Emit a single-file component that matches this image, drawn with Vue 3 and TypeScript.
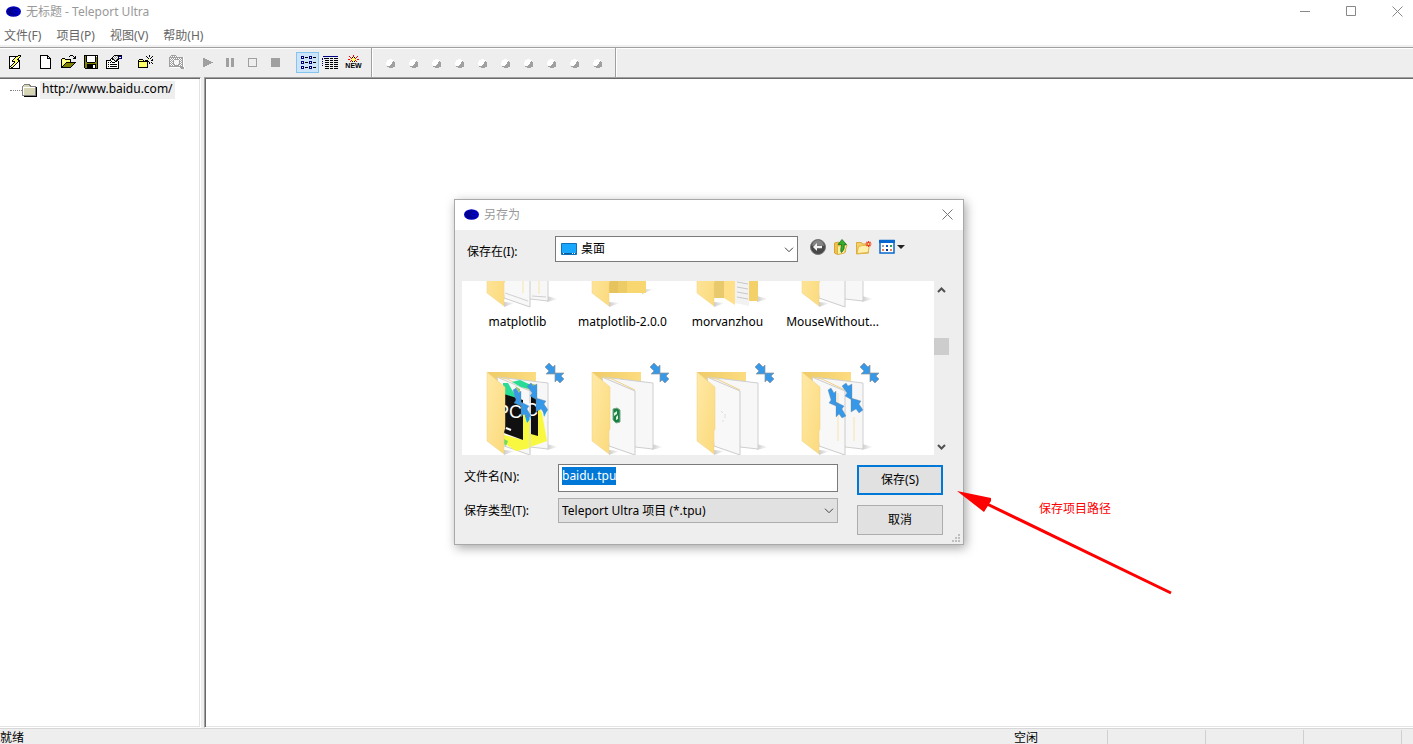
<script setup lang="ts">
import { onMounted, ref } from 'vue'

type Run = { x: number; y: number; w: number; fill: string }

const palette: Record<string, string> = {
  k: '#000000',
  w: '#ffffff',
  y: '#ffff66',
  o: '#808000',
  g: '#a0a0a0',
  b: '#000080',
  r: '#ff0000',
}

/* Turns rows of palette letters into horizontal runs of pixels. */
function pixels(rows: string[]): Run[] {
  const runs: Run[] = []
  rows.forEach((row, y) => {
    let x = 0
    while (x < row.length) {
      const c = row[x]
      let end = x + 1
      while (end < row.length && row[end] === c) end++
      if (palette[c]) runs.push({ x, y, w: end - x, fill: palette[c] })
      x = end
    }
  })
  return runs
}

const wizard = [
  '',
  '............kkk..',
  '...kkkkkkkkkyyk..',
  '...kwwwwwkyyyk...',
  '...kwwwwkyyyk....',
  '...kwwwkyyykk....',
  '...kwwkyyyyykk...',
  '...kwwkkkyyykk...',
  '...kwwwwkyykwk...',
  '...kwwwkyykwwk...',
  '...kwwkyykwwwk...',
  '...kwkyykwwwwk...',
  '...kkyykwwwwwk...',
  '...kykkwwwwwwk...',
  '...kkkkkkkkkkk...',
]
const newFile = [
  '',
  '...kkkkkkkk......',
  '...kwwwwwwkk.....',
  '...kwwwwwwkwk....',
  '...kwwwwwwkkkk...',
  ...Array<string>(9).fill('...kwwwwwwwwwk...'),
  '...kkkkkkkkkkk...',
]
const open = [
  '',
  '..........kkk....',
  '.........k...k.k.',
  '..............kk.',
  '..kkk........kkk.',
  '.kyyykkkkkk......',
  '.kywyyywyyk......',
  '.kyyywyyyyk......',
  '.kywyykkkkkkkkkk.',
  '.kyyykooooooook..',
  '.kyykooooooook...',
  '.kykooooooook....',
  '.kkooooooook.....',
  '.kkkkkkkkkk......',
]
const save = [
  '',
  '.kkkkkkkkkkkkkk..',
  '.kokwwwwwwwwkwk..',
  ...Array<string>(5).fill('.kokwwwwwwwwkok..'),
  '.kookkkkkkkkook..',
  '.kooooooooooook..',
  '.kookkkkkkkkkok..',
  '.kookkkkkkwwkok..',
  '.kookkkkkkwwkok..',
  '.kookkkkkkwwkok..',
  '..kkkkkkkkkkkkk..',
]
const properties = [
  '',
  '........kkkkkkkk.',
  '.......kwgwgkbbb.',
  '......kwgwgwkwwb.',
  '.....kkgwgwgkbbb.',
  '....kwkkgwgkk....',
  'kkkkkwwwkgkk.....',
  'kwwwwkwwwkkwk....',
  'kwkwkwkkkwwwk....',
  'kwwwwwwwwwwwk....',
  'kwkwkkkkkkkwk....',
  'kwwwwwwwwwwwk....',
  'kwkwkkkkkkkwk....',
  'kwwwwwwwwwwwk....',
  'kkkkkkkkkkkkk....',
]
const newFolder = [
  '',
  '............k....',
  '.........k..k..k.',
  '..........k...k..',
  '...........k.k...',
  '..kkkk......y..k.',
  '.kyyyyk.kkk...kk.',
  '.kkkkkkkkkkk.....',
  '.kyyyyyyyyk.k.k..',
  '.kyyyyyyyyk.k..k.',
  '.kyyyyyyyyk......',
  '.kyyyyyyyyk......',
  '.kyyyyyyyyk......',
  '.kkkkkkkkkk......',
]
const find = [
  '',
  '...ggggg.........',
  '..gwgwgwgw.......',
  '.ggggggggggggggw.',
  '.gwgwgwgwgwgwggw.',
  '.ggwgwgggggwgwgw.',
  '.gwgwgw.w.wgwggw.',
  '.ggwgg.w.w.ggwgw.',
  '.gwgwgw.w.wgwggw.',
  '.ggwgg.w.w.ggwgw.',
  '.gwgwggw.wggwggw.',
  '.ggwgwgggggwgwgw.',
  '.ggggggggggggggw.',
  '..wwwwwwwwwwggggw',
  '.............gggw',
]
const listView = [
  '',
  '',
  ...['', '', ''].flatMap(() => [
    '..bbb.....bbb....',
    '..bwb.kkk.bwb.kkk',
    '..bbb.....bbb....',
    '',
    '',
  ]),
]
const detailView = [
  '',
  '',
  '.bbbbbbbbbbbbbbb.',
  '',
  'b.kkkkk.kkk.kkkk.',
  'b................',
  '...kkkk.kkk.kkkk.',
  'b................',
  '...kkkk.kkk.kkkk.',
  'b................',
  '...kkkk.kkk.kkkk.',
  'b................',
  '...kkkk.kkk.kkkk.',
  '',
  '...kkkk.kkk.kkkk.',
]
const play = ['', '', '', '', '....gg', '....gggg', '....gggggg', '....gggggggg', '....gggggggggg', '....gggggggg', '....gggggg', '....gggg', '....gg']
const pause = ['', '', '', '', ...Array<string>(9).fill('....ggg..ggg')]
const hollow = ['', '', '', '', '...ggggggggg', ...Array<string>(7).fill('...g.......g'), '...ggggggggg']
const square = ['', '', '', '', ...Array<string>(9).fill('...ggggggggg')]
const burst = [
  '',
  '........r........',
  '....r...r...r....',
  '.....r.kyk.r.....',
  '......ryyyr......',
  '...rr.yyyyy.rr...',
  '......ryyyr......',
  '.....r.kyk.r.....',
]
const lamp = [
  '...www...',
  '.wwwwwww.',
  '.wwwwwwg.',
  'wwwwwwggg',
  'wwwwwwggg',
  'wwwwwgggg',
  '.wwwggggg',
  '.gggggggg',
  '...gggg..',
]
const lampRuns = pixels(lamp)

const toolGroups = [
  [{ name: '向导', art: wizard }],
  [
    { name: '新建', art: newFile },
    { name: '打开', art: open },
    { name: '保存', art: save },
    { name: '属性', art: properties },
  ],
  [{ name: '新建文件夹', art: newFolder }],
  [{ name: '查找', art: find }],
  [
    { name: '开始', art: play },
    { name: '暂停', art: pause },
    { name: '停止', art: hollow },
    { name: '中止', art: square },
  ],
  [
    { name: '列表', art: listView, on: true },
    { name: '详细', art: detailView },
    { name: '最新', art: burst, caption: 'NEW' },
  ],
].map((group) => group.map((t) => ({ on: false, caption: '', ...t, runs: pixels(t.art) })))

const menus = ['文件(F)', '项目(P)', '视图(V)', '帮助(H)']

const folders = [
  { id: 1, label: 'matplotlib', kind: 'docs' },
  { id: 2, label: 'matplotlib-2.0.0', kind: 'nested' },
  { id: 3, label: 'morvanzhou', kind: 'mixed' },
  { id: 4, label: 'MouseWithout...', kind: 'plain' },
  { id: 5, label: '', kind: 'pycharm' },
  { id: 6, label: '', kind: 'app' },
  { id: 7, label: '', kind: 'empty' },
  { id: 8, label: '', kind: 'links' },
]

const fileName = ref('baidu.tpu')
const nameBox = ref<HTMLInputElement | null>(null)

onMounted(() => {
  nameBox.value?.focus()
  nameBox.value?.select()
})
</script>

<template>
  <div class="window">
    <header class="titlebar">
      <svg class="logo" width="15" height="11" viewBox="0 0 15 11">
        <ellipse cx="7.5" cy="5.5" rx="7.5" ry="5.3" fill="#0000c0" />
        <ellipse cx="7" cy="5.5" rx="6" ry="4" fill="#000090" />
        <ellipse cx="10" cy="5.5" rx="2.5" ry="1.7" fill="none" stroke="#0000e8" />
      </svg>
      <span class="caption">无标题 - Teleport Ultra</span>
      <div class="controls">
        <button type="button" aria-label="最小化">
          <svg width="11" height="11"><path d="M0 5.5h10" stroke="#888" /></svg>
        </button>
        <button type="button" aria-label="最大化">
          <svg width="11" height="11"><path d="M.5 .5h9v9h-9z" fill="none" stroke="#888" /></svg>
        </button>
        <button type="button" aria-label="关闭">
          <svg width="11" height="11"><path d="M.5 .5l10 10M10.5 .5l-10 10" stroke="#888" /></svg>
        </button>
      </div>
    </header>

    <nav class="menubar">
      <button v-for="m in menus" :key="m" type="button">{{ m }}</button>
    </nav>

    <div class="toolbar">
      <div class="tools">
        <div v-for="(group, i) in toolGroups" :key="i" class="group">
          <button v-for="t in group" :key="t.name" type="button" :class="{ on: t.on }" :aria-label="t.name">
            <svg width="17" height="17" viewBox="0 0 17 17">
              <g shape-rendering="crispEdges">
                <rect v-for="(p, n) in t.runs" :key="n" :x="p.x" :y="p.y" :width="p.w" height="1" :fill="p.fill" />
              </g>
              <text v-if="t.caption" x="8.5" y="14" text-anchor="middle" class="tag">{{ t.caption }}</text>
            </svg>
          </button>
        </div>
      </div>
      <div class="lamps">
        <i v-for="n in 10" :key="n">
          <svg width="9" height="9" shape-rendering="crispEdges">
            <rect v-for="(p, k) in lampRuns" :key="k" :x="p.x" :y="p.y" :width="p.w" height="1" :fill="p.fill" />
          </svg>
        </i>
      </div>
    </div>

    <main class="panes">
      <aside class="tree">
        <a class="node" href="#">
          <i class="dots"></i>
          <svg width="16" height="13" viewBox="0 0 16 13" shape-rendering="crispEdges">
            <path d="M3 1h5l1 2h6v10H2V2z" fill="#000" />
            <path d="M2 0h5l2 2h5v10H0V2z" fill="#808080" />
            <path d="M2 1h5l1 2H1zM1 3h12v8H1z" fill="#d6d6b4" />
            <path d="M1 3h12M1.500 3v8" stroke="#fff" fill="none" />
          </svg>
          <span>http://www.baidu.com/</span>
        </a>
      </aside>
      <section class="view"></section>
    </main>

    <footer class="status">
      <span class="ready">就绪</span>
      <span class="idle">空闲</span>
      <i></i><i></i><i></i><i class="tail"></i>
    </footer>

    <form class="dialog" role="dialog" aria-label="另存为" @submit.prevent>
      <header class="dialog-title">
        <svg class="logo" width="15" height="11" viewBox="0 0 15 11">
          <ellipse cx="7.5" cy="5.500" rx="7.5" ry="5.3" fill="#0000c0" />
          <ellipse cx="7" cy="5.5" rx="6" ry="4" fill="#000090" />
          <ellipse cx="10" cy="5.5" rx="2.5" ry="1.7" fill="none" stroke="#0000e8" />
        </svg>
        <span class="caption">另存为</span>
        <button type="button" aria-label="关闭">
          <svg width="11" height="11"><path d="M.5 .5l10 10M10.5 .5l-10 10" stroke="#777" /></svg>
        </button>
      </header>

      <div class="place">
        <label for="folder">保存在(I):</label>
        <div class="drop">
          <svg class="desk" width="16" height="12" viewBox="0 0 16 12">
            <path d="M.5 .5h15v11H.5z" fill="#18a8ff" stroke="#1070b8" />
            <path d="M1 10.500h14" stroke="#0c5c98" />
            <path d="M2 10.500h1M11 10.500h1M13 10.500h1" stroke="#fff" />
          </svg>
          <select id="folder"><option>桌面</option></select>
          <svg class="chevron" width="10" height="6"><path d="M1 .7l4 4 4-4" /></svg>
        </div>
        <div class="place-tools">
          <button type="button" aria-label="后退">
            <svg width="16" height="16" viewBox="0 0 16 16">
              <circle cx="8" cy="8" r="7.500" fill="#484848" stroke="#777" />
              <path d="M2 7a6 6 0 0 1 12 0q-6-2-12 0z" fill="#858585" />
              <path d="M3 8l4-4v2.700h5v2.600H7V12z" fill="#f4f4f4" />
            </svg>
          </button>
          <button type="button" aria-label="向上一级">
            <svg width="16" height="16" viewBox="0 0 16 16">
              <path d="M1.500 4l4-1 1 1.500h6V13l-8 2.500-3-1.500z" fill="#eec34c" stroke="#d5a336" />
              <path d="M4.500 7l9.500-1-2.500 8-7 1.500z" fill="#ffeda0" stroke="#dcb34a" />
              <path d="M9 .5l4.500 5h-2.300q1 5-2.700 8-1.500-1 .2-8H5z" fill="#35ad2e" stroke="#16751b" stroke-width=".8" />
            </svg>
          </button>
          <button type="button" aria-label="新建文件夹">
            <svg width="16" height="16" viewBox="0 0 16 16">
              <path d="M.5 3.500h5l1 1.500h6v9l-12 1z" fill="#f4cf67" stroke="#dcaa3e" />
              <path d="M2.500 7.500l4-1 7-.5-1.500 7.500-11 1z" fill="#fff0ab" stroke="#e3b851" />
              <path d="M12.500 2v6M9.500 5h6M10.400 2.900l4.200 4.200M14.600 2.900l-4.200 4.200" stroke="#e83c20" stroke-width="1.200" />
              <circle cx="12.500" cy="5" r="1" fill="#ffdf72" />
            </svg>
          </button>
          <button type="button" class="wide" aria-label="查看">
            <svg width="26" height="16" viewBox="0 0 26 16">
              <path d="M1 1.500h14V14H1z" fill="#fff" stroke="#0868d0" stroke-width="1.500" />
              <path d="M0 1h16v3H0z" fill="#0868d0" />
              <path d="M3 6h2v2H3z" fill="#a0a0a0" /><path d="M7 6h2v2H7z" fill="#1858b8" />
              <path d="M11 6h2v2h-2z" fill="#30a050" /><path d="M3 10h2v2H3z" fill="#f08050" />
              <path d="M7 10h2v2H7z" fill="#102f88" /><path d="M11 10h2v2h-2z" fill="#f08050" />
              <path d="M18 6h8l-4 4z" fill="#222" />
            </svg>
          </button>
        </div>
      </div>

      <div class="browser">
        <div class="files">
          <ul>
            <li v-for="f in folders" :key="f.id">
              <svg width="105" height="96" viewBox="0 0 105 96">
                <defs>
                  <linearGradient :id="'flap' + f.id" x2="1" y2="1">
                    <stop offset="0" stop-color="#ffe9a6" /><stop offset="1" stop-color="#fbda7c" />
                  </linearGradient>
                  <linearGradient :id="'back' + f.id" x2="1">
                    <stop offset="0" stop-color="#efcb66" /><stop offset="1" stop-color="#fbdc80" />
                  </linearGradient>
                  <linearGradient :id="'shade' + f.id" x2="1">
                    <stop offset="0" stop-color="#ccc" /><stop offset="1" stop-color="#fff" />
                  </linearGradient>
                </defs>
                <path d="M39 89l11 1-11 4z" :fill="`url(#shade${f.id})`" />
                <path v-if="f.kind === 'nested'" d="M72 76l12 0-12 5z" :fill="`url(#shade${f.id})`" />
                <path v-else d="M82 83l11 3-11 3z" :fill="`url(#shade${f.id})`" />
                <path d="M22 11h49v12H30z" :fill="`url(#back${f.id})`" />

                <template v-if="f.kind === 'nested'">
                  <path d="M39 20h37v60H39z" fill="#f8d670" />
                  <path d="M39 20h9v60h-9z" fill="#e6c35c" /><path d="M48 20h9v60h-9z" fill="#edcc66" />
                </template>
                <template v-else-if="f.kind === 'mixed'">
                  <path d="M38 20h12v65H38z" fill="#e8c96c" />
                  <path d="M74 20h9v68h-9z" fill="#f4d168" />
                  <path d="M60 22l14 4v67l-14-3z" fill="#f2f2f2" />
                  <path d="M62 69l11 2M62 74l11 2M62 79l11 2M62 84l11 2" stroke="#c8c8c8" />
                  <path d="M49 20l11 6v66l-11-7z" fill="#ffdf88" />
                </template>
                <template v-else>
                  <path d="M33 16l50 6v66l-18-2z" fill="#f7f7f7" stroke="#cfcfcf" />
                  <path d="M32 16l33 14v64l-26-9z" fill="#f8f8f8" stroke="#cccccc" />
                  <path d="M32 16l10 2 23 11" fill="none" stroke="#f0d287" />
                </template>

                <g v-if="f.kind === 'docs'">
                  <path d="M58 20v60M74 25v56" stroke="#f7e4aa" />
                  <path d="M40 80l23 8M67 83l14 1" stroke="#d0d0d0" />
                </g>
                <g v-else-if="f.kind === 'pycharm'">
                  <path d="M39 74l19 5V50l7 8v29l-14 3-12-8zM65 72l7 2V44l5 8 5 28-17 6z" fill="#f8f840" />
                  <path d="M38 22l5 0 7 12v3l-12-3zM47 21l8-2 11 5-2 4-8-2z" fill="#28dc96" />
                  <path d="M60 55l6-3v5l-4 5zM77 45l5 5-3 6z" fill="#18a8f8" />
                  <path d="M65 24v70" stroke="#ddd" />
                  <path d="M39 33l19 6v40l-19-7zM66 34l7 5v36l-7-2z" fill="#101010" />
                  <text x="32" y="57" class="pc">PC</text>
                  <text x="60" y="55" class="pc">C</text>
                  <path d="M41 67l5 2" fill="none" stroke="#fff" stroke-width="2" />
                  <path d="M39 78l4 2-2 5-2-2z" fill="#70dc60" />
                  <path d="M50 25l5 3v5zM65 22l6 2-2 4z" fill="#9bc660" />
                </g>
                <g v-else-if="f.kind === 'app'">
                  <path d="M43 48l4-1 3 2v12l-4 1-3-3z" fill="#188040" stroke="#78a888" />
                  <path d="M44 52l3-2v3l-3 2zM46 56l2-2v4l-2 1z" fill="#d8f4dc" />
                </g>
                <path v-else-if="f.kind === 'empty'" d="M46 50l2 2M47 60h2M50 53v4" stroke="#ddd" />
                <path v-else-if="f.kind === 'links'" d="M58 32v48M74 56v24" stroke="#f9e3aa" />

                <g v-if="f.kind === 'pycharm' || f.kind === 'links'" fill="#3898e8" stroke="#70828f" stroke-width=".3">
                  <path d="M48 29l3-2 3 5 2-2v15l-7-3 2-3zM56 41l8 4-2 3 4 7-4 2-3-4-3 3z" />
                  <path d="M62 25l4-3 2 3 4-2v16l-7-4 2-3zM71 37l10 3-2 3 4 6-4 3-3-4-5 3z" />
                </g>

                <path d="M22 11l18 15v42l-1 2v23L22 80z" :fill="`url(#flap${f.id})`" stroke="#f0d080" stroke-width=".5" />
                <path d="M80 6l4-4 4 4 2-2v9h-9l3-3zM90 12h9l-3 3 3 3-4 4-3-3-2 2z" fill="#3898e8" stroke="#8c9298" stroke-width=".7" />
              </svg>
              <span v-if="f.label">{{ f.label }}</span>
            </li>
          </ul>
        </div>
        <div class="scroll">
          <svg width="9" height="6"><path d="M1 5l3.500-3.500L8 5" /></svg>
          <b></b>
          <svg width="9" height="6"><path d="M1 1l3.500 3.500L8 1" /></svg>
        </div>
      </div>

      <div class="fields">
        <div class="inputs">
          <label for="filename">文件名(N):</label>
          <input id="filename" ref="nameBox" v-model="fileName" type="text" spellcheck="false" autocomplete="off" />
          <label for="filetype">保存类型(T):</label>
          <div class="drop type">
            <select id="filetype"><option>Teleport Ultra 项目 (*.tpu)</option></select>
            <svg class="chevron" width="10" height="6"><path d="M1 .7l4 4 4-4" /></svg>
          </div>
        </div>
        <div class="actions">
          <button type="submit" class="primary">保存(S)</button>
          <button type="button">取消</button>
        </div>
      </div>
      <svg class="grip" width="8" height="8" shape-rendering="crispEdges">
        <path d="M6 0h2v2H6zM3 3h2v2H3zM6 3h2v2H6zM0 6h2v2H0zM3 6h2v2H3zM6 6h2v2H6z" fill="#bfbfbf" />
      </svg>
    </form>

    <div class="note">
      <svg width="216" height="104" viewBox="0 0 216 104">
        <path d="M0 0l34 7v3l-2 3-5 8z" fill="#f00" />
        <path d="M28 12l186 90" stroke="#f00" stroke-width="3" />
      </svg>
      <span>保存项目路径</span>
    </div>
  </div>
</template>

<style>
html,
body {
  overflow: hidden;
}
</style>

<style scoped>
.window {
  position: relative;
  display: flex;
  flex-direction: column;
  height: 100vh;
  overflow: hidden;
  background: #fff;
  color: #000;
  font: 12px/16px "Noto Sans", "Noto Sans CJK SC", sans-serif;
}
* {
  box-sizing: border-box;
}
button,
input,
select {
  margin: 0;
  padding: 0;
  border: 0;
  border-radius: 0;
  background: none;
  color: inherit;
  font: inherit;
}
svg {
  display: block;
  flex: none;
}
.titlebar {
  display: flex;
  align-items: center;
  height: 23px;
  padding-left: 6px;
  color: #999;
}
.caption {
  margin-left: 5px;
}
.controls {
  display: flex;
  gap: 15px;
  margin-left: auto;
}
.controls button {
  display: flex;
  align-items: center;
  justify-content: center;
  width: 31px;
  height: 22px;
}
.menubar {
  display: flex;
  gap: 15px;
  height: 24px;
  padding-left: 4px;
  border-bottom: 2px solid #f0f0f0;
  color: #666;
}
.menubar button {
  padding-top: 4px;
}
.toolbar {
  display: flex;
  height: 30px;
  border-top: 1px solid #a0a0a0;
  background: #eee;
  box-shadow: inset 0 1px #fff;
}
.tools,
.lamps {
  display: flex;
  align-items: center;
  border-right: 1px solid #a0a0a0;
  box-shadow: 1px 0 #fff;
}
.tools {
  gap: 8px;
  padding: 0 6px 0 3px;
}
.group {
  display: flex;
}
.group button {
  display: flex;
  align-items: center;
  justify-content: center;
  width: 23px;
  height: 21px;
}
.group .on {
  background: #cce4f7;
  box-shadow: inset 0 0 0 1px #84c4f0;
}
.tag {
  font: bold 7px "Liberation Sans", sans-serif;
}
.pc {
  fill: #fff;
  font: 18px "Liberation Sans", sans-serif;
}
.lamps {
  padding: 0 6px 0 7px;
}
.lamps i {
  display: flex;
  justify-content: center;
  width: 23px;
  padding-top: 2px;
}
.panes {
  display: flex;
  flex: 1;
  min-height: 0;
  background: #eee;
}
.tree {
  width: 201px;
  border-top: 1px solid #a0a0a0;
  border-right: 1px solid #fff;
  border-bottom: 1px solid #fff;
  background: #fff;
  box-shadow: inset 0 1px #696969, inset -1px -1px #e3e3e3;
}
.node {
  display: flex;
  align-items: center;
  width: max-content;
  margin: 3px 0 0 10px;
  color: #000;
  text-decoration: none;
}
.dots {
  width: 12px;
  border-top: 1px dotted #808080;
}
.node span {
  margin-left: 2px;
  padding: 0 2px 2px;
  background: #eee;
}
.view {
  flex: 1;
  margin-left: 3px;
  border-top: 1px solid #a0a0a0;
  border-left: 1px solid #a0a0a0;
  border-bottom: 1px solid #fff;
  background: #fff;
  box-shadow: inset 1px 1px #696969, inset 0 -1px #e3e3e3;
}
.status {
  display: flex;
  height: 16px;
  border-top: 1px solid #d7d7d7;
  background: #eee;
  line-height: 12px;
}
.status span {
  padding-top: 3px;
}
.ready {
  flex: 1;
}
.idle {
  width: 93px;
}
.status i {
  width: 98px;
  margin-top: 1px;
  border-left: 1px solid #d0d0d0;
}
.status .tail {
  width: 12px;
}
.dialog {
  position: absolute;
  top: 199px;
  left: 454px;
  width: 510px;
  padding-bottom: 9px;
  border: 1px solid #a9a9a9;
  background: #eee;
  box-shadow: 2px 3px 10px rgba(0, 0, 0, 0.35);
}
.dialog-title {
  display: flex;
  align-items: center;
  height: 30px;
  padding: 0 10px 2px 9px;
  background: #fff;
  color: #999;
}
.dialog-title .caption {
  padding-top: 1px;
}
.dialog-title button {
  margin-left: auto;
}
.place {
  display: flex;
  height: 51px;
  padding: 6px 0 0 12px;
}
.place label {
  width: 88px;
  padding-top: 8px;
}
.drop {
  position: relative;
  width: 243px;
  height: 26px;
}
.drop select {
  width: 100%;
  height: 100%;
  padding: 0 24px 0 25px;
  border: 1px solid #7a7a7a;
  background: #fff;
  appearance: none;
}
.desk {
  position: absolute;
  top: 7px;
  left: 6px;
}
.chevron {
  position: absolute;
  top: 11px;
  right: 4px;
  fill: none;
  stroke: #444;
}
.place-tools {
  display: flex;
  gap: 7px;
  padding: 3px 0 0 12px;
}
.place-tools button {
  display: flex;
  width: 16px;
  height: 16px;
}
.place-tools .wide {
  width: 26px;
}
.browser {
  display: flex;
  height: 174px;
  padding-left: 7px;
}
.files {
  width: 472px;
  overflow: hidden;
  background: #fff;
}
.files ul {
  display: grid;
  grid-template-columns: repeat(4, 105px);
  grid-auto-rows: 148px;
  margin: -68px 0 0 3px;
  padding: 0;
  list-style: none;
  text-align: center;
}
.files span {
  display: block;
  padding-top: 5px;
}
.scroll {
  display: flex;
  flex-direction: column;
  align-items: center;
  width: 15px;
  padding: 6px 0 5px;
}
.scroll path {
  fill: none;
  stroke: #505050;
  stroke-width: 2;
}
.scroll b {
  width: 15px;
  height: 17px;
  margin: 45px 0 auto;
  background: #cdcdcd;
}
.fields {
  display: flex;
  gap: 19px;
  padding: 9px 0 0 9px;
}
.inputs {
  display: grid;
  grid-template-columns: 94px 280px;
  grid-template-rows: 28px 25px;
  gap: 6px 0;
  align-content: start;
}
.inputs label {
  padding-top: 5px;
}
.inputs input {
  padding: 3px 3px 7px;
  border: 1px solid #7a7a7a;
  outline: none;
  background: #fff;
  line-height: 18px;
}
.inputs input::selection {
  background: #0078d7;
  color: #fff;
}
.inputs .type {
  width: auto;
  height: 25px;
}
.inputs .type select {
  padding: 1px 24px 0 3px;
  border-color: #adadad;
  background: #e1e1e1;
}
.inputs .type .chevron {
  top: 10px;
}
.actions {
  display: flex;
  flex-direction: column;
  gap: 10px;
  padding-top: 1px;
}
.actions button {
  width: 86px;
  height: 30px;
  border: 1px solid #adadad;
  background: #e1e1e1;
}
.actions .primary {
  border: 2px solid #0078d7;
}
.grip {
  position: absolute;
  right: 3px;
  bottom: 2px;
}
.note {
  position: absolute;
  top: 491px;
  left: 957px;
  color: #f00;
}
.note span {
  position: absolute;
  top: 10px;
  left: 82px;
  white-space: nowrap;
}
</style>
